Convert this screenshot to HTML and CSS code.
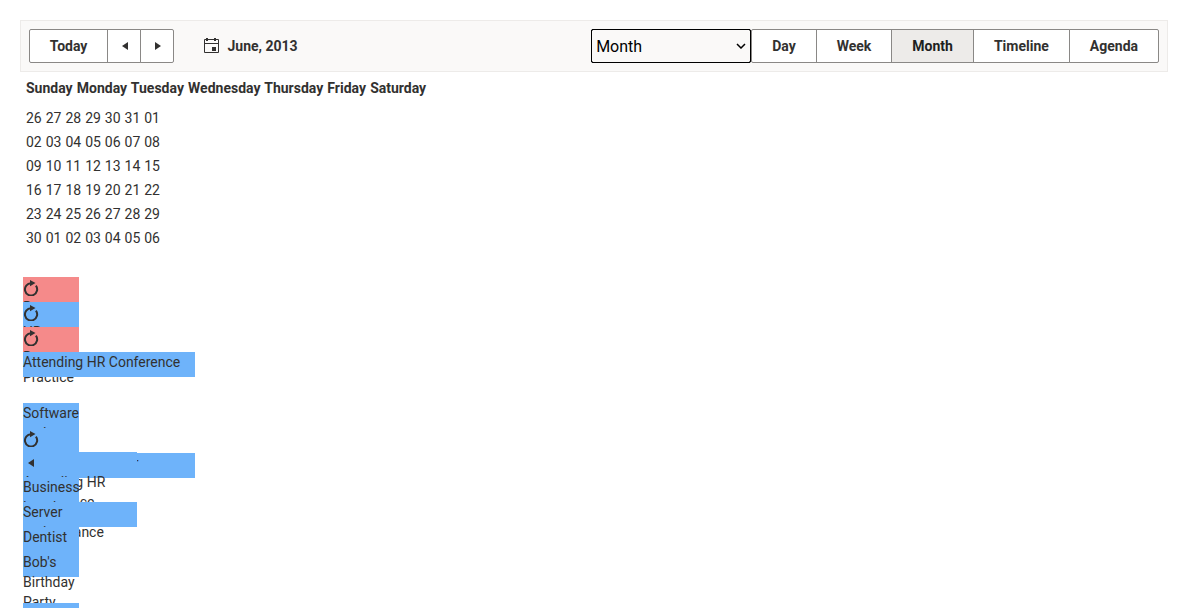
FILE: index.html
```html
<!DOCTYPE html>
<html lang="en">
<head>
<meta charset="utf-8">
<title>Scheduler</title>
<link rel="stylesheet" href="styles.css">
</head>
<body>
<svg class="sprite" width="0" height="0">
  <symbol id="refresh" viewBox="0 0 16 16"><path d="M12.9 5.7A6.1 6.1 0 1 1 8 3.3" fill="none" stroke="currentColor" stroke-width="2"/><path d="M7 0l5.5 3L7 6.2z" fill="currentColor"/></symbol>
  <symbol id="left" viewBox="0 0 16 16"><path d="M11 4v8L5 8z" fill="currentColor"/></symbol>
  <symbol id="right" viewBox="0 0 16 16"><path d="M5 4v8l6-4z" fill="currentColor"/></symbol>
</svg>
<div class="scheduler">
  <header class="toolbar">
    <div class="group">
      <button class="btn today">Today</button>
      <button class="btn arrow" aria-label="Previous"><svg class="icon"><use href="#left"/></svg></button>
      <button class="btn arrow" aria-label="Next"><svg class="icon"><use href="#right"/></svg></button>
    </div>
    <div class="current">
      <svg class="icon" viewBox="0 0 16 16"><path d="M1.5 1.5h14v13h-14zM1 5.5h14" fill="none" stroke="currentColor"/><path d="M3 0h2v3H3zM11 0h2v3h-2zM9 9h4v4H9z" fill="currentColor"/></svg>
      <span>June, 2013</span>
    </div>
    <div class="views">
      <div class="picker">
        <select><option>Month</option></select>
        <svg class="chevron" viewBox="0 0 10 6"><path d="M1 1l4 4 4-4" fill="none" stroke="#000" stroke-width="1.5"/></svg>
      </div>
      <div class="group">
        <button class="btn">Day</button>
        <button class="btn">Week</button>
        <button class="btn selected">Month</button>
        <button class="btn">Timeline</button>
        <button class="btn">Agenda</button>
      </div>
    </div>
  </header>
  <div class="days">Sunday Monday Tuesday Wednesday Thursday Friday Saturday</div>
  <div class="dates">
    <div>26 27 28 29 30 31 01</div>
    <div>02 03 04 05 06 07 08</div>
    <div>09 10 11 12 13 14 15</div>
    <div>16 17 18 19 20 21 22</div>
    <div>23 24 25 26 27 28 29</div>
    <div>30 01 02 03 04 05 06</div>
  </div>
  <div class="events">
    <div class="event red"><svg class="icon"><use href="#refresh"/></svg><div>Dance Practice</div></div>
    <div class="event"><svg class="icon"><use href="#refresh"/></svg><div>HR Lecture</div></div>
    <div class="event red"><svg class="icon"><use href="#refresh"/></svg><div>Dance Practice</div></div>
    <div class="event triple">Attending HR Conference</div>
  </div>
  <div class="events">
    <div class="event">Software updates</div>
    <div class="event"><svg class="icon"><use href="#refresh"/></svg><div>HR Lecture</div></div>
    <div class="event triple tight">Marketing Seminar</div>
    <div class="event double overlap"><svg class="icon"><use href="#left"/></svg><div>Attending HR Conference</div></div>
    <div class="event">Business Lunch</div>
    <div class="event double">Server maintenance</div>
    <div class="event">Dentist</div>
    <div class="event">Bob's Birthday Party</div>
  </div>
  <div class="events">
    <div class="event"></div>
  </div>
</div>
</body>
</html>
```
FILE: styles.css
```css
* { box-sizing: border-box; }
html, body { height: 100%; overflow: hidden; }
body {
  margin: 0;
  padding: 20px;
  background: #fff;
  color: #323130;
  font: 14px/20px Roboto, sans-serif;
}
.sprite { display: none; }
.icon { width: 16px; height: 16px; flex: none; display: block; overflow: visible; }
.toolbar {
  display: flex;
  align-items: center;
  height: 52px;
  padding: 0 8px;
  border: 1px solid #edebe9;
  background: #faf9f8;
}
.group { display: flex; }
.btn {
  height: 34px;
  padding: 0 20px;
  border: 1px solid #8a8886;
  background: #fff;
  color: #323130;
  font: bold 14px/20px Roboto, sans-serif;
}
.btn + .btn { margin-left: -1px; }
.btn:first-child { border-radius: 2px 0 0 2px; }
.btn:last-child { border-radius: 0 2px 2px 0; }
.btn.selected { background: #edebe9; color: #201f1e; }
.today { width: 79px; padding: 0; }
.btn.arrow { padding: 0 7px 0 9px; width: 34px; }
.current { display: flex; gap: 8px; margin-left: 29px; font-weight: bold; }
.current .icon { margin-top: 2px; }
.current span { margin-left: 0.5px; }
.views { display: flex; margin-left: auto; }
.picker { display: grid; align-items: center; }
.picker > * { grid-area: 1 / 1; }
.picker select {
  appearance: none;
  width: 160px;
  height: 34px;
  padding: 0 4px;
  border: 1px solid #000;
  border-radius: 2px;
  outline: 1px solid #000;
  outline-offset: -1px;
  background: #faf9f8;
  color: #000;
  font: 16px Roboto, sans-serif;
}
.chevron {
  width: 10px;
  height: 6px;
  justify-self: end;
  margin-right: 5px;
  pointer-events: none;
}
.days { padding: 6px 6px 10px; font-weight: bold; word-spacing: 0.65px; }
.dates { display: grid; row-gap: 4px; padding: 0 6px; margin-bottom: 29px; word-spacing: 0.5px; }
.events { display: flex; flex-direction: column; padding-left: 3px; margin-bottom: 26px; }
.event { width: 56px; height: 25px; background: #6eb3fa; }
.event .icon { margin: 3px 0 1px; }
.red { background: #f58a8a; }
.double { width: 114px; }
.triple { width: 172px; }
.tight { letter-spacing: -0.12px; }
.overlap { margin-top: -26px; }
```
